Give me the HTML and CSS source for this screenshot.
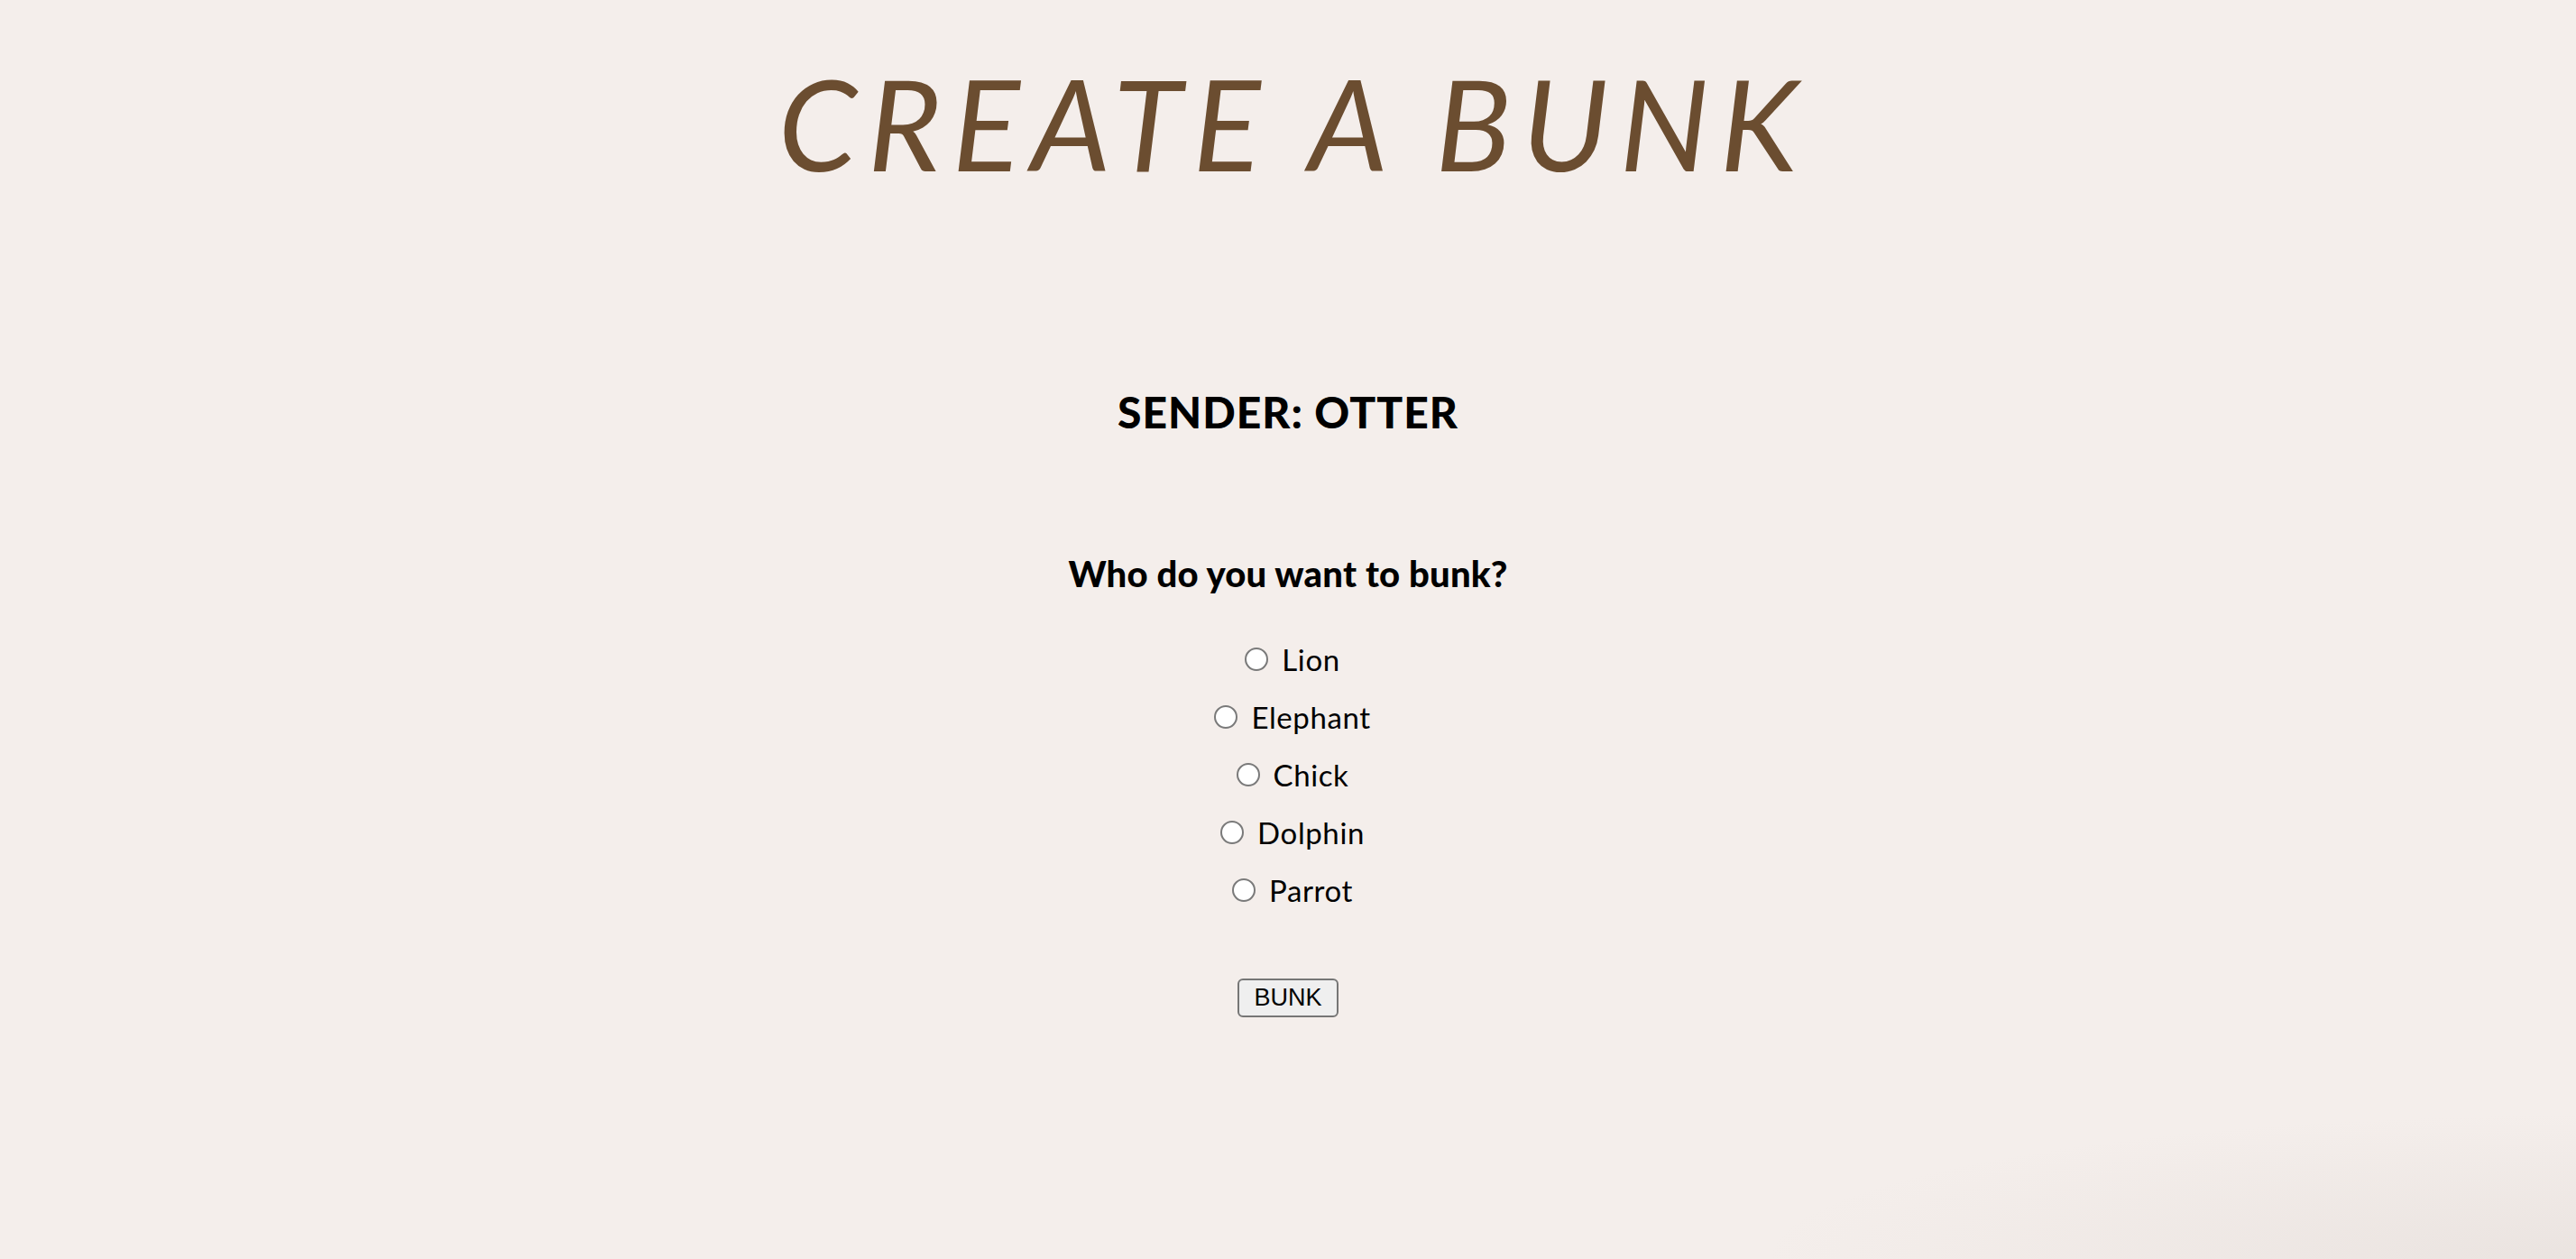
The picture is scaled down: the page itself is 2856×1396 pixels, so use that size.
FILE: index.html
```html
<!DOCTYPE html>
<html lang="en">
<head>
<meta charset="utf-8">
<title>Create a Bunk</title>
<link rel="stylesheet" href="styles.css">
</head>
<body>
<main class="page">
  <h1 class="title">CREATE A BUNK</h1>
  <h2 class="sender">SENDER: OTTER</h2>
  <form class="bunk-form">
    <h3 class="question">Who do you want to bunk?</h3>
    <div class="options">
      <label class="option"><input type="radio" name="target" value="lion"> Lion</label>
      <label class="option"><input type="radio" name="target" value="elephant"> Elephant</label>
      <label class="option"><input type="radio" name="target" value="chick"> Chick</label>
      <label class="option"><input type="radio" name="target" value="dolphin"> Dolphin</label>
      <label class="option"><input type="radio" name="target" value="parrot"> Parrot</label>
    </div>
    <button type="button" class="bunk-btn">BUNK</button>
  </form>
</main>
</body>
</html>
```
FILE: styles.css
```css
html, body {
  margin: 0;
  padding: 0;
}
body {
  background:
    radial-gradient(ellipse 900px 160px at 100% 100%, rgba(200, 190, 185, 0.22), rgba(200, 190, 185, 0) 100%),
    #f4eeeb;
  min-height: 1396px;
  font-family: "Lato", "Noto Sans", sans-serif;
  color: #000;
}
.page {
  display: flex;
  flex-direction: column;
  align-items: center;
  text-align: center;
}
.title {
  margin: 52px 0 0;
  font-size: 140px;
  font-weight: 400;
  font-style: italic;
  color: #6b4d30;
  line-height: normal;
  letter-spacing: 12px;
  padding-left: 12px;
}
.sender {
  margin: 208px 0 0;
  font-size: 48px;
  font-weight: 900;
  line-height: normal;
  letter-spacing: 1px;
}
.bunk-form {
  display: flex;
  flex-direction: column;
  align-items: center;
}
.question {
  margin: 127px 0 0;
  font-size: 40px;
  font-weight: 900;
  line-height: normal;
  letter-spacing: 0.2px;
}
.options {
  margin-top: 39px;
  display: flex;
  flex-direction: column;
  align-items: center;
}
.option {
  font-size: 33px;
  line-height: 64px;
  height: 64px;
  letter-spacing: 0.6px;
}
.option input {
  appearance: none;
  -webkit-appearance: none;
  width: 26px;
  height: 26px;
  margin: 0 6px 0 10px;
  border: 2px solid #7a7a7a;
  border-radius: 50%;
  background: #fff;
  vertical-align: baseline;
  box-sizing: border-box;
}
.bunk-btn {
  margin-top: 66px;
  font-family: "Liberation Sans", Arial, sans-serif;
  font-size: 27px;
  padding: 4px 16px;
  border: 2px solid #767676;
  border-radius: 6px;
  background: #efefef;
  color: #000;
  line-height: normal;
}
```
